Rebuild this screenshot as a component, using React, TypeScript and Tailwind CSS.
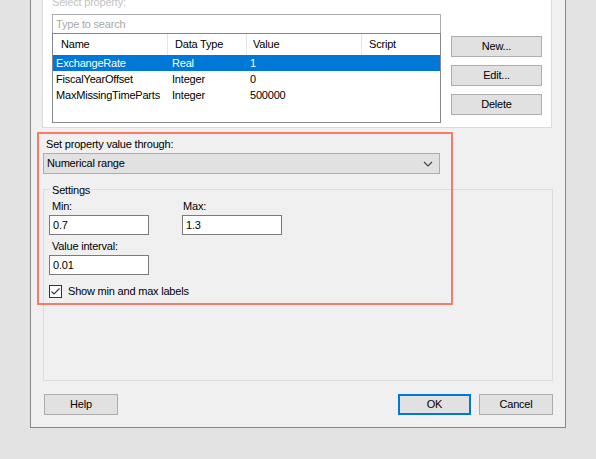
import React from "react"

const font = { fontFamily: "'Liberation Sans', Arial, sans-serif" }

function Btn({ label, primary, className = "" }: { label: string; primary?: boolean; className?: string }) {
  return (
    <div
      className={
        "flex items-center justify-center h-[21px] bg-[#e1e1e1] text-black " +
        (primary ? "border-2 border-[#0078d7] " : "border border-[#adadad] ") +
        className
      }
    >
      {label}
    </div>
  )
}

const rows = [
  { name: "ExchangeRate", type: "Real", value: "1", selected: true },
  { name: "FiscalYearOffset", type: "Integer", value: "0" },
  { name: "MaxMissingTimeParts", type: "Integer", value: "500000" },
]

export default function App() {
  return (
    <div
      className="relative w-[596px] h-[459px] overflow-hidden bg-[#e3e3e3] text-[11px] tracking-[-0.2px] text-black"
      style={font}
    >
      <div className="ml-[30px] w-[536px] h-[428px] flex flex-col bg-[#f0f0f0] border-x border-b border-[#888888] pl-[11px] pr-[13px]">
        {/* property panel */}
        <div className="flex flex-col bg-white border-x border-b border-[#dadada] pl-[9px] pb-[4px]">
          <div className="-mt-[5px] h-[14px] leading-[14px] text-[#c4c4c4]">Select property:</div>
          <div className="flex mt-[5px]">
            <div className="flex flex-col w-[389px]">
              <div className="h-[20px] border border-[#abadb3] flex items-center pl-[3px] text-[#a8a8a8]">Type to search</div>
              <div className="-mt-px h-[90px] border border-[#828790] flex flex-col">
                <div className="flex h-[21px] items-center">
                  <div className="w-[115px] pl-[8px] border-r border-[#e5e5e5] h-full flex items-center">Name</div>
                  <div className="w-[79px] pl-[7px] border-r border-[#e5e5e5] h-full flex items-center">Data Type</div>
                  <div className="w-[115px] pl-[6px] border-r border-[#e5e5e5] h-full flex items-center">Value</div>
                  <div className="pl-[7px] h-full flex items-center">Script</div>
                </div>
                {rows.map((r) => (
                  <div
                    key={r.name}
                    className={"flex h-[16px] items-center " + (r.selected ? "bg-[#0078d7] text-white" : "text-black")}
                  >
                    <div className="w-[115px] pl-[3px]">{r.name}</div>
                    <div className="w-[79px] pl-[4px]">{r.type}</div>
                    <div className="w-[115px] pl-[3px]">{r.value}</div>
                  </div>
                ))}
              </div>
            </div>
            <div className="flex flex-col gap-[8px] ml-[10px] mt-[22px]">
              <Btn label="New..." className="w-[91px]" />
              <Btn label="Edit..." className="w-[91px]" />
              <Btn label="Delete" className="w-[91px]" />
            </div>
          </div>
        </div>

        {/* value source */}
        <div className="mt-[9px] pl-[4px] h-[14px] leading-[14px]">Set property value through:</div>
        <div className="mt-[2px] ml-px w-[397px] h-[21px] bg-[#e1e1e1] border border-[#adadad] flex items-center justify-between pl-[3px] pr-[6px]">
          <span>Numerical range</span>
          <svg width="10" height="6" viewBox="0 0 10 6">
            <path d="M1 1 L5 5 L9 1" fill="none" stroke="#444" strokeWidth="1.2" />
          </svg>
        </div>

        {/* settings group */}
        <div className="relative mt-[15px] ml-px -mr-px h-[192px] border border-[#dcdcdc] pl-[5px]">
          <div className="absolute -top-[7px] left-[6px] px-[2px] bg-[#f0f0f0] leading-[14px]">Settings</div>
          <div className="flex gap-[33px] mt-[9px]">
            <div className="flex flex-col">
              <div className="pl-[3px] h-[14px] leading-[14px]">Min:</div>
              <div className="mt-[2px] w-[100px] h-[20px] bg-white border border-[#7a7a7a] flex items-center pl-[3px]">0.7</div>
            </div>
            <div className="flex flex-col">
              <div className="pl-[1px] h-[14px] leading-[14px]">Max:</div>
              <div className="mt-[2px] w-[100px] h-[20px] bg-white border border-[#7a7a7a] flex items-center pl-[3px]">1.3</div>
            </div>
          </div>
          <div className="mt-[4px] pl-[3px] h-[14px] leading-[14px]">Value interval:</div>
          <div className="mt-[2px] w-[100px] h-[20px] bg-white border border-[#7a7a7a] flex items-center pl-[3px]">0.01</div>
          <div className="mt-[8px] flex items-center gap-[6px]">
            <div className="w-[13px] h-[13px] bg-white border border-[#333333] flex items-center justify-center">
              <svg width="11" height="11" viewBox="0 0 11 11">
                <path d="M1.5 5.5 L4 8 L9.5 2.5" fill="none" stroke="#333" strokeWidth="1.1" />
              </svg>
            </div>
            <span>Show min and max labels</span>
          </div>
        </div>

        {/* footer buttons */}
        <div className="flex mt-[13px] ml-[2px] -mr-px">
          <Btn label="Help" className="w-[74px]" />
          <div className="flex-1" />
          <Btn label="OK" primary className="w-[73px]" />
          <Btn label="Cancel" className="w-[74px] ml-[8px]" />
        </div>
      </div>

      {/* annotation highlight */}
      <div className="absolute left-[37px] top-[132px] w-[416px] h-[173px] border-2 border-[#fa7a68] pointer-events-none" />
    </div>
  )
}
